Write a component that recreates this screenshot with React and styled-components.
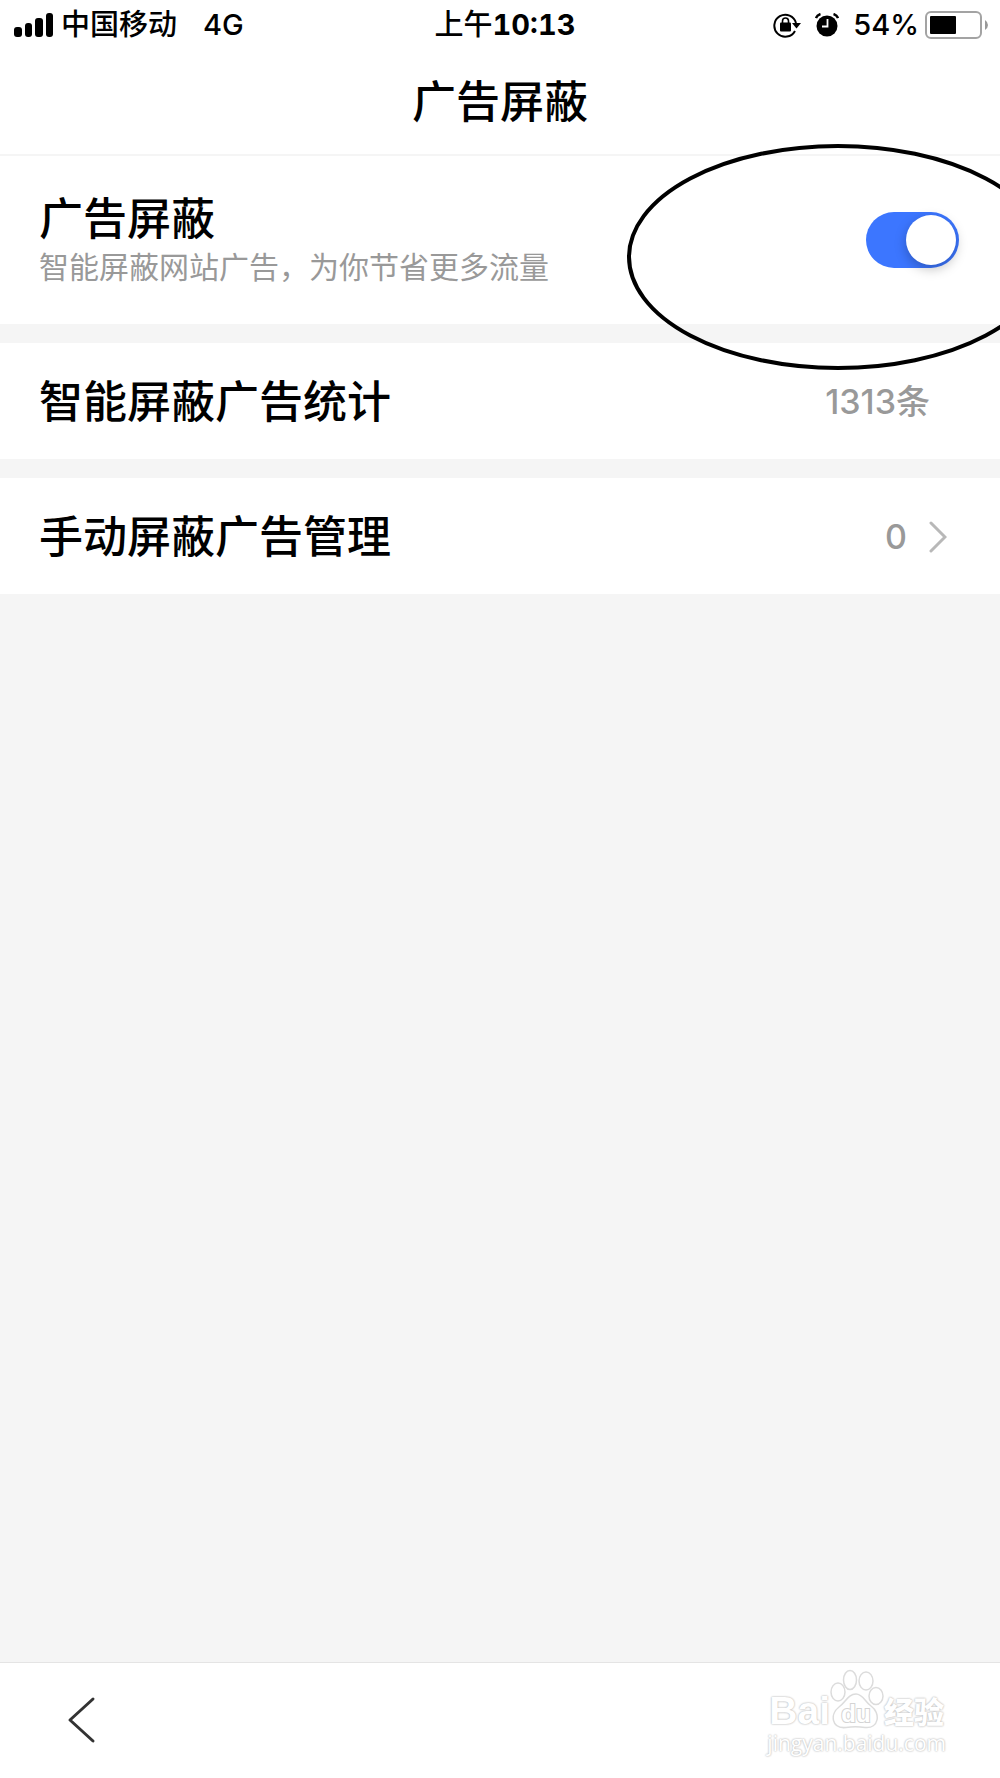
import React, { useState } from "react";
import styled, { createGlobalStyle } from "styled-components";

const GlobalStyle = createGlobalStyle`
  *, *::before, *::after { box-sizing: border-box; }
  body {
    margin: 0;
    background: #f5f5f5;
    color: #000;
    font-family: Inter, "Noto Sans CJK SC", sans-serif;
  }
`;

const Screen = styled.div`
  position: relative;
  display: flex;
  flex-direction: column;
  min-height: 100vh;
  overflow: hidden;
`;

const Header = styled.header`
  background: #fff;
  border-bottom: 2px solid #f5f5f5;
`;

const StatusBar = styled.div`
  display: grid;
  grid-template-columns: 1fr auto 1fr;
  align-items: center;
  height: 50px;
  padding: 0 12px 0 14px;
  font-size: 29px;
  line-height: 40px;
  font-weight: 500;
`;

const StatusGroup = styled.div`
  display: flex;
  align-items: center;
  justify-content: ${(p) => (p.$end ? "flex-end" : "flex-start")};
  gap: ${(p) => (p.$end ? 6 : 8)}px;
`;

const Network = styled.span`
  padding-left: 18px;
`;

const Clock = styled.time`
  padding-left: 8px;
  font-variant-numeric: tabular-nums;
  b { font-weight: 700; }
`;

const StatusIcon = styled.svg`
  display: block;
  flex: none;
  margin-right: ${(p) => p.$space || 0}px;
`;

const PageTitle = styled.h1`
  margin: 0;
  padding: 26px 0;
  font-size: 44px;
  line-height: 52px;
  font-weight: 500;
  text-align: center;
`;

const List = styled.main`
  display: flex;
  flex-direction: column;
  gap: 19px;
  flex: 1;
`;

const Row = styled.section`
  position: relative;
  display: flex;
  align-items: center;
  justify-content: space-between;
  min-height: ${(p) => (p.$tall ? 168 : 116)}px;
  padding: ${(p) => (p.$tall ? 0 : 2)}px ${(p) => p.$right}px 0 39px;
  background: #fff;
`;

const RowLink = styled(Row)`
  color: inherit;
  text-decoration: none;
`;

const RowLabel = styled.label`
  padding-bottom: 2px;
`;

const RowTitle = styled.h2`
  margin: 0;
  font-size: 44px;
  line-height: 52px;
  font-weight: 500;
`;

const RowNote = styled.p`
  margin: 4px 0 0;
  color: #999;
  font-size: 30px;
  line-height: 36px;
`;

const RowValue = styled.span`
  display: flex;
  align-items: center;
  gap: 22px;
  color: #999;
  font-size: 34px;
  line-height: 44px;
  font-weight: 500;
`;

const Switch = styled.input`
  appearance: none;
  flex: none;
  display: flex;
  align-items: center;
  justify-content: ${(p) => (p.checked ? "flex-end" : "flex-start")};
  width: 93px;
  height: 56px;
  margin: 0;
  padding: 3px;
  border-radius: 28px;
  background: ${(p) => (p.checked ? "#3c76ff" : "#ddd")};
  cursor: pointer;

  &::before {
    content: "";
    width: 50px;
    height: 50px;
    border-radius: 50%;
    background: #fff;
    box-shadow: 0 4px 12px rgba(0, 0, 0, 0.25);
  }
`;

const Circle = styled.svg`
  position: absolute;
  z-index: 1;
  top: -12px;
  right: -49px;
  pointer-events: none;
`;

const Footer = styled.footer`
  display: flex;
  align-items: center;
  justify-content: space-between;
  height: 116px;
  padding: 0 54px 2px 66px;
  border-top: 1px solid #e4e4e4;
  background: #fff;
`;

const BackButton = styled.button`
  display: flex;
  padding: 0;
  border: 0;
  background: none;
  cursor: pointer;
`;

const Watermark = styled.div`
  display: flex;
  flex-direction: column;
  align-items: center;
  padding-bottom: 14px;
  color: #fff;
  text-shadow: 0 0 2px #bbb, 0 0 2px #ccc;
`;

const Brand = styled.div`
  display: flex;
  align-items: flex-end;
  height: 60px;
`;

const BrandText = styled.span`
  font-family: ${(p) => (p.$cjk ? '"Noto Sans CJK SC"' : '"Liberation Sans"')}, sans-serif;
  font-size: ${(p) => (p.$cjk ? 30 : 39)}px;
  line-height: ${(p) => (p.$cjk ? 38 : 36)}px;
  font-weight: ${(p) => (p.$cjk ? 900 : 700)};
`;

const Paw = styled.svg`
  text-shadow: none;
`;

const Site = styled.span`
  font-family: "Open Sans", sans-serif;
  font-size: 21px;
  line-height: 28px;
`;

export default function App() {
  const [blocking, setBlocking] = useState(true);

  return (
    <Screen>
      <GlobalStyle />
      <Header>
        <StatusBar>
          <StatusGroup>
            <StatusIcon width="39" height="24" viewBox="0 0 39 24" aria-hidden="true">
              <rect x="0" y="14" width="8" height="10" rx="3" />
              <rect x="11" y="10" width="7" height="14" rx="3" />
              <rect x="21" y="5" width="8" height="19" rx="3" />
              <rect x="32" y="0" width="7" height="24" rx="3" />
            </StatusIcon>
            <span>中国移动</span>
            <Network>4G</Network>
          </StatusGroup>
          <Clock>上午<b>10:13</b></Clock>
          <StatusGroup $end>
            <StatusIcon $space={8} width="28" height="26" viewBox="0 0 28 26" aria-hidden="true">
              <path d="M22 19A11 11 0 1 1 23 11" fill="none" stroke="#000" strokeWidth="2" />
              <path d="M19 11h9l-4.500 5.500z" />
              <rect x="7" y="10.500" width="11" height="9" rx="1" />
              <path d="M9.500 12V9a3 3 0 0 1 6 0V12" fill="none" stroke="#000" strokeWidth="1.600" />
            </StatusIcon>
            <StatusIcon $space={8} width="24" height="24" viewBox="0 0 24 24" aria-hidden="true">
              <circle cx="12" cy="13" r="10.500" />
              <path d="M1 5Q2 2 5.500 1M23 5Q22 2 18.500 1" fill="none" stroke="#000" strokeWidth="2.400" />
              <path d="M12.500 6v7.500H7" fill="none" stroke="#fff" strokeWidth="1.800" />
            </StatusIcon>
            <span>54%</span>
            <StatusIcon width="63" height="28" viewBox="0 0 63 28" aria-hidden="true">
              <rect x="1" y="1" width="55" height="26" rx="5" fill="none" stroke="#a3a3a3" strokeWidth="2" />
              <rect x="5" y="5" width="26" height="18" rx="1" />
              <path d="M60 9q3 2 3 5t-3 5z" fill="#999" />
            </StatusIcon>
          </StatusGroup>
        </StatusBar>
        <PageTitle>广告屏蔽</PageTitle>
      </Header>

      <List>
        <Row $tall $right={41}>
          <RowLabel htmlFor="ad-block">
            <RowTitle>广告屏蔽</RowTitle>
            <RowNote>智能屏蔽网站广告，为你节省更多流量</RowNote>
          </RowLabel>
          <Switch
            id="ad-block"
            type="checkbox"
            checked={blocking}
            onChange={(e) => setBlocking(e.target.checked)}
          />
          <Circle width="422" height="226" viewBox="0 0 422 226" aria-hidden="true">
            <ellipse cx="211" cy="113" rx="209" ry="111" fill="none" stroke="#000" strokeWidth="4" />
          </Circle>
        </Row>
        <Row $right={70}>
          <RowTitle>智能屏蔽广告统计</RowTitle>
          <RowValue>1313条</RowValue>
        </Row>
        <RowLink as="a" href="#manual" $right={53}>
          <RowTitle>手动屏蔽广告管理</RowTitle>
          <RowValue>
            0
            <svg width="18" height="32" viewBox="0 0 18 32" aria-hidden="true">
              <path d="M2 2l14 14L2 30" fill="none" stroke="#b8b8b8" strokeWidth="3" strokeLinecap="round" />
            </svg>
          </RowValue>
        </RowLink>
      </List>

      <Footer>
        <BackButton type="button" aria-label="返回">
          <svg width="30" height="48" viewBox="0 0 30 48" aria-hidden="true">
            <path d="M27 3L4 24l23 21" fill="none" stroke="#333" strokeWidth="3" strokeLinecap="round" strokeLinejoin="round" />
          </svg>
        </BackButton>
        <Watermark>
          <Brand>
            <BrandText>Bai</BrandText>
            <Paw width="54" height="60" viewBox="0 0 54 60" aria-hidden="true">
              <g fill="#fff" stroke="#dcdcdc" strokeWidth="1.500">
                <path d="M26 25C33 25 35 33 41 37C51 44 49 60 35 58.500C29 57.500 22 57.500 16 58.500C1 60 0 45 9 38C16 33 18 25 26 25Z" />
                <ellipse cx="8" cy="23" rx="7" ry="9" />
                <ellipse cx="20" cy="11" rx="6.500" ry="9.500" />
                <ellipse cx="36" cy="12" rx="7" ry="9" />
                <ellipse cx="46" cy="27" rx="7" ry="8.500" />
              </g>
              <text x="26" y="53" textAnchor="middle" fill="#fff" stroke="#d4d4d4" strokeWidth="2" paintOrder="stroke" fontFamily="Liberation Sans, sans-serif" fontSize="24" fontWeight="700">du</text>
            </Paw>
            <BrandText $cjk>经验</BrandText>
          </Brand>
          <Site>jingyan.baidu.com</Site>
        </Watermark>
      </Footer>
    </Screen>
  );
}
